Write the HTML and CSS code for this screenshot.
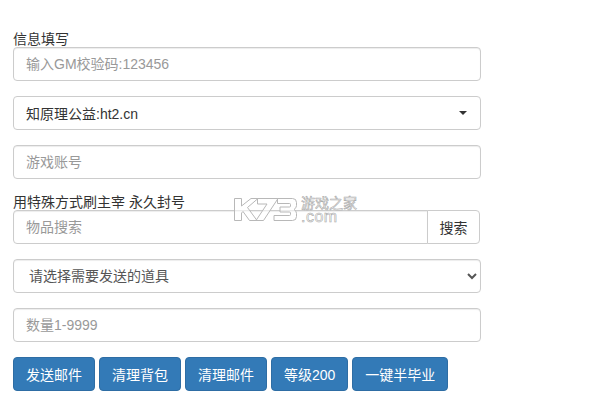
FILE: index.html
```html
<!DOCTYPE html>
<html lang="zh-CN">
<head>
<meta charset="utf-8">
<title>信息填写</title>
<link rel="stylesheet" href="styles.css">
</head>
<body>
<form class="form">
  <div class="group">
    <label class="label">信息填写</label>
    <input class="control" type="text" placeholder="输入GM校验码:123456">
  </div>
  <div class="group">
    <button type="button" class="control picker"><span>知原理公益:ht2.cn</span><i class="caret"></i></button>
  </div>
  <div class="group">
    <input class="control" type="text" placeholder="游戏账号">
  </div>
  <div class="group">
    <label class="label">用特殊方式刷主宰 永久封号</label>
    <div class="search">
      <input class="control search-input" type="text" placeholder="物品搜索">
      <button type="button" class="search-btn">搜索</button>
    </div>
  </div>
  <div class="group">
    <select class="control native">
      <option>请选择需要发送的道具</option>
    </select>
  </div>
  <div class="group">
    <input class="control" type="text" placeholder="数量1-9999">
  </div>
  <div class="actions">
    <button type="button" class="btn">发送邮件</button>
    <button type="button" class="btn">清理背包</button>
    <button type="button" class="btn">清理邮件</button>
    <button type="button" class="btn">等级200</button>
    <button type="button" class="btn">一键半毕业</button>
  </div>
</form>
<svg class="watermark" width="130" height="34" viewBox="0 0 130 34" aria-hidden="true">
  <g class="logo">
    <path d="M1.5 3.5H8.5V11L18 3.5H25L14.5 12.5L24 25.5H16.5L10 16.5L8.500 18V25.500H1.500Z"/>
    <path d="M24.500 3.500H45L30.500 25.500H23L34 9H24.500Z"/>
    <path d="M44.500 3.500H59.500Q63.500 3.500 63.500 7.500V10.500Q63.500 13 61 14.500Q63.500 16 63.500 18.500V21.500Q63.500 25.500 59.500 25.500H41V20.500H56.500Q57.500 20.500 57.500 19.500V18Q57.500 17 56.500 17H47V12H56.500Q57.500 12 57.500 11V9.500Q57.500 8.500 56.500 8.500H44.500Z"/>
  </g>
  <text class="wm wm-cn" x="68" y="13">游戏之家</text>
  <text class="wm wm-en" x="68" y="27">.com</text>
</svg>
</body>
</html>
```

FILE: styles.css
```css
* {
  box-sizing: border-box;
}

html,
body {
  margin: 0;
  background: #fff;
}

body {
  position: relative;
  width: 592px;
  height: 418px;
  overflow: hidden;
  padding: 31px 13px 0;
  font-family: "Liberation Sans", "Noto Sans CJK SC", sans-serif;
  font-size: 14px;
  color: #333;
}

.form {
  width: 468px;
}

.group {
  margin-bottom: 15px;
}

.label {
  display: block;
  height: 16px;
  line-height: 16px;
  color: #333;
}

.control {
  display: block;
  width: 100%;
  height: 34px;
  padding: 6px 12px;
  border: 1px solid #ccc;
  border-radius: 4px;
  background: #fff;
  box-shadow: inset 0 1px 1px rgba(0, 0, 0, .075);
  font: inherit;
  color: #555;
  outline: none;
}

.control::placeholder {
  color: #999;
  opacity: 1;
}

.native {
  padding-left: 11px;
}

.picker {
  display: flex;
  align-items: center;
  justify-content: space-between;
  box-shadow: none;
  color: #333;
  text-align: left;
}

.caret {
  width: 0;
  height: 0;
  margin-right: 1px;
  border-top: 4px solid #333;
  border-left: 4px solid transparent;
  border-right: 4px solid transparent;
}

.search {
  display: flex;
  width: 467px;
}

.search-input {
  flex: 1;
  min-width: 0;
  border-radius: 4px 0 0 4px;
}

.search-btn {
  width: 53px;
  height: 34px;
  margin-left: -1px;
  padding: 0;
  border: 1px solid #ccc;
  border-radius: 0 4px 4px 0;
  background: #fff;
  font: inherit;
  color: #333;
}

.actions {
  display: flex;
  gap: 4px;
}

.btn {
  height: 34px;
  padding: 6px 12px;
  border: 1px solid #2e6da4;
  border-radius: 4px;
  background: #337ab7;
  font: inherit;
  color: #fff;
  white-space: nowrap;
}

.watermark {
  position: absolute;
  left: 233px;
  top: 195px;
  pointer-events: none;
}

.logo path {
  fill: rgba(255, 255, 255, .6);
  stroke: #b8b8b8;
  stroke-width: 1;
}

.wm {
  fill: rgba(255, 255, 255, .7);
  stroke: #aaa;
  stroke-width: .6;
  font-family: "Liberation Sans", "Noto Sans CJK SC", sans-serif;
}

.wm-cn {
  font-size: 14px;
}

.wm-en {
  font-size: 16px;
  letter-spacing: .5px;
}
```
